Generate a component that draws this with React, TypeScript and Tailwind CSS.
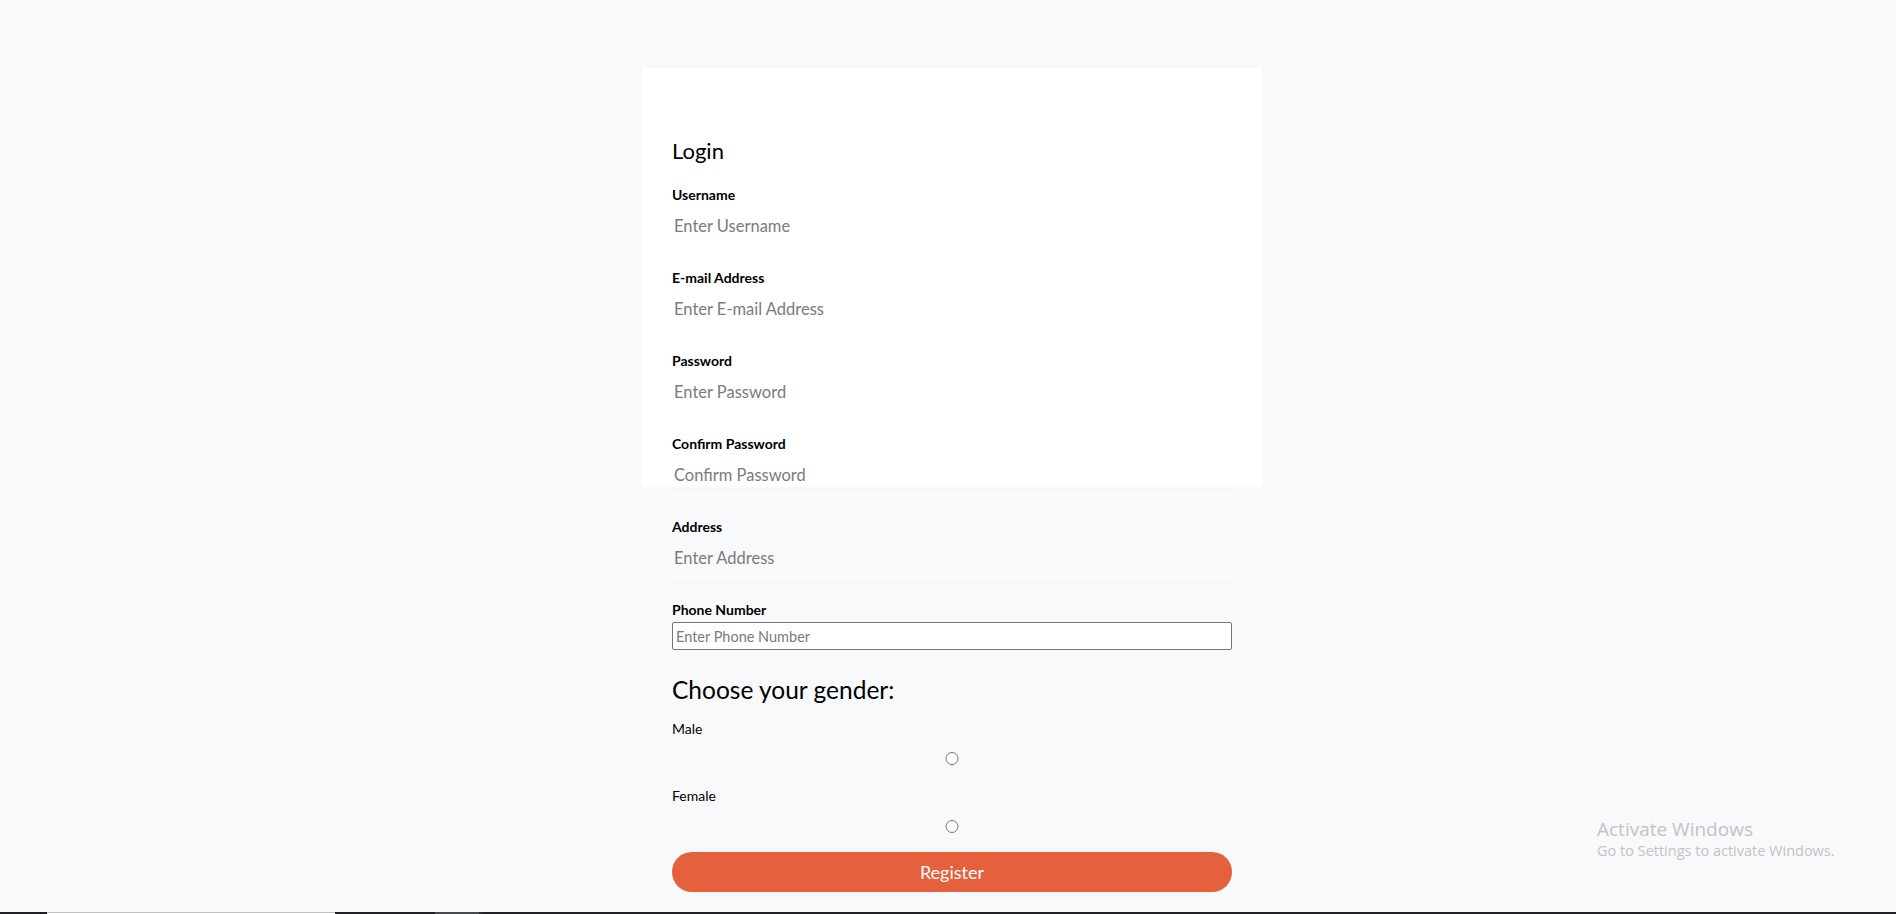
import React from 'react';

const font = { fontFamily: 'Lato, "Noto Sans", sans-serif' };

interface FieldProps {
  label: string;
  placeholder: string;
  type?: string;
}

/** Label + borderless input with a faint bottom rule */
const Field: React.FC<FieldProps> = ({ label, placeholder, type = 'text' }) => (
  <div className="mb-[22px]">
    <label className="mb-[2px] block text-[14px] font-bold leading-[20px] text-black">{label}</label>
    <input
      type={type}
      placeholder={placeholder}
      className="block h-[39px] w-full border-b border-white bg-transparent px-[2px] pb-[1px] text-[16.5px] text-black outline-none placeholder:text-[#7b7b7b]"
    />
  </div>
);

const Taskbar: React.FC = () => (
  <div className="flex h-[2px] w-full shrink-0 bg-[#1f2125]">
    <div className="w-[47px]" />
    <div className="w-[288px] border-t border-[#c2c2c2] bg-white" />
    <div className="w-[100px]" />
    <div className="w-[44px] bg-[#474a4f]" />
    <div className="w-[4px] bg-[#2a2c30]" />
  </div>
);

export default function App() {
  return (
    <div className="flex h-screen flex-col overflow-hidden bg-[#f8f9fa]" style={font}>
      <div className="relative min-h-0 flex-1">
        <div className="pl-[642px] pt-[68px]">
          <div className="h-[419px] w-[620px] bg-white px-[30px] pt-[68px]">
            <h2 className="mb-[19px] text-[22px] font-normal leading-[30px] text-black">Login</h2>
            <form onSubmit={(e) => e.preventDefault()}>
              <Field label="Username" placeholder="Enter Username" />
              <Field label="E-mail Address" placeholder="Enter E-mail Address" type="email" />
              <Field label="Password" placeholder="Enter Password" type="password" />
              <Field label="Confirm Password" placeholder="Confirm Password" type="password" />
              <Field label="Address" placeholder="Enter Address" />

              <label className="mb-[2px] block text-[14px] font-bold leading-[20px] text-black">Phone Number</label>
              <input
                type="tel"
                placeholder="Enter Phone Number"
                className="block h-[28px] w-full rounded-[2px] border border-[#767676] bg-white px-[3px] text-[14.5px] text-black placeholder:text-[#7b7b7b]"
              />

              <h3 className="mt-[24px] text-[24.5px] font-normal leading-[32px] text-black">Choose your gender:</h3>
              <label className="mt-[13px] block text-[14px] leading-[20px] text-black">Male</label>
              <input type="radio" name="gender" className="mt-[13px] block h-[13px] w-full" />
              <label className="mt-[21px] block text-[14px] leading-[20px] text-black">Female</label>
              <input type="radio" name="gender" className="mt-[14px] block h-[13px] w-full" />

              <button
                type="submit"
                className="mt-[19px] block h-[40px] w-full rounded-full bg-[#e5603d] text-[18px] leading-[40px] text-white"
              >
                Register
              </button>
            </form>
          </div>
        </div>

        <div
          className="pointer-events-none absolute left-[1597px] top-[817px] text-[#c1c3c6]"
          style={{ fontFamily: '"Open Sans", "Noto Sans", sans-serif' }}
        >
          <div className="text-[19px] leading-[24px]">Activate Windows</div>
          <div className="text-[14.5px] leading-[20px]">Go to Settings to activate Windows.</div>
        </div>
      </div>
      <Taskbar />
    </div>
  );
}
